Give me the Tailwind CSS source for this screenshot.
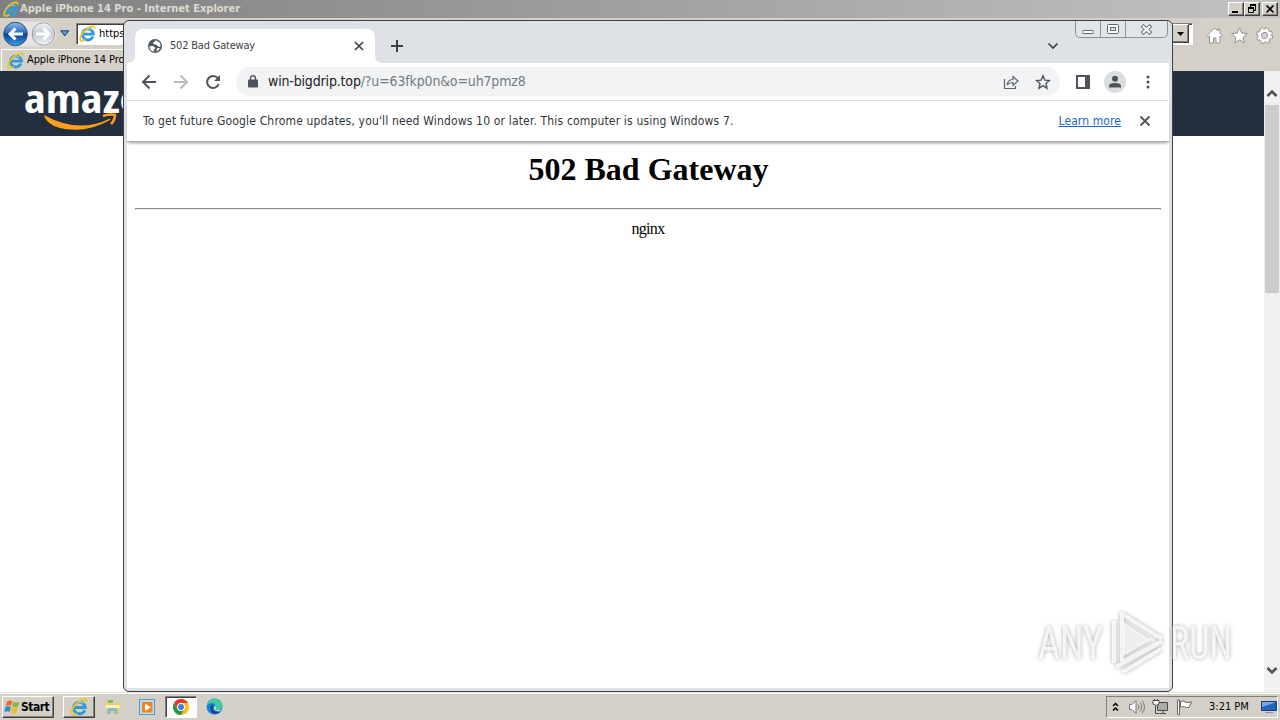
<!DOCTYPE html>
<html lang="en">
<head>
  <meta charset="UTF-8">
  <meta name="viewport" content="width=device-width, initial-scale=1.0">
  <title>502 Bad Gateway</title>
  <script src="https://cdn.jsdelivr.net/npm/@tailwindcss/browser@4"></script>
  <style>
    body {
      font-family: 'DejaVu Sans Condensed', 'DejaVu Sans', sans-serif;
      font-stretch: condensed;
    }
    .raised {
      border: 1px solid;
      border-color: #fff #404040 #404040 #fff;
      box-shadow: inset -1px -1px 0 #808080;
    }
    .sunken {
      border: 1px solid;
      border-color: #808080 #fff #fff #808080;
    }
  </style>
</head>
<body class="bg-white">
<!-- shared icons -->
<svg class="hidden">
  <symbol id="ie" viewBox="0 0 18 18">
    <path d="M14.800 12.200A5.800 5.800 0 1 1 15.200 9.600H5" fill="none" stroke="#2f9bdc" stroke-width="3"/>
    <path d="M5.500 6.500Q9 2.800 13.500 5.500" fill="none" stroke="#8fd4f5" stroke-width="1"/>
    <path d="M1.800 16.500C-.3 14 3.500 7.200 8.800 3.700 13 1 17.200.4 16.600 4.200M1.800 16.500c1.500 1 3.700 0 5.200-1" fill="none" stroke="#f0c41c" stroke-width="1.800"/>
  </symbol>
</svg>

<div class="relative flex flex-col w-[1280px] h-[720px] overflow-hidden text-[11px] text-black">

  <!-- Internet Explorer -->
  <header class="flex items-center h-[18px] pl-[3px] pr-0.5 bg-linear-to-r from-[#808080] to-[#c2c2c2]">
    <svg class="size-4"><use href="#ie"/></svg>
    <span class="flex-1 pl-px font-bold text-[#dedad2] leading-[18px] whitespace-nowrap">Apple iPhone 14 Pro - Internet Explorer</span>
    <div class="raised w-4 h-[14px] bg-[#d4d0c8]"><svg class="w-[14px] h-3"><path d="M3 9h6" stroke="#000" stroke-width="2"/></svg></div>
    <div class="raised w-4 h-[14px] bg-[#d4d0c8]"><svg class="w-[14px] h-3" fill="none" stroke="#000"><path d="M5 1.500h6M5.500 2v2M10.500 2v5.500H9M3 5h6M3.500 5v4.500h5V5" /><path d="M5 2h6M3 5h6" stroke-width="2"/></svg></div>
    <div class="raised w-4 h-[14px] ml-0.5 bg-[#d4d0c8]"><svg class="w-[14px] h-3"><path d="M3.500 2.500l7 7m0-7l-7 7" stroke="#000" stroke-width="1.700"/></svg></div>
  </header>

  <div class="flex items-center h-[31px] pl-[3px] pr-2 bg-[#d4d0c8]">
    <svg class="w-[54px] h-[28px]" viewBox="0 0 54 28">
      <defs>
        <linearGradient id="back" x2="0" y2="1"><stop stop-color="#8cb9e8"/><stop offset=".45" stop-color="#2c6cc0"/><stop offset=".5" stop-color="#0b3d94"/><stop offset="1" stop-color="#3aa0ee"/></linearGradient>
        <linearGradient id="fwd" x2="0" y2="1"><stop stop-color="#f2f4f6"/><stop offset=".5" stop-color="#c3cbd5"/><stop offset="1" stop-color="#edf2f7"/></linearGradient>
      </defs>
      <path d="M12 1.500h29a12 12 0 0 1 0 25H12z" fill="#e6e4e0"/>
      <circle cx="12.500" cy="14" r="11.800" fill="url(#back)" stroke="#31507e"/>
      <path d="M20 14H7m5.500-5.500L7 14l5.500 5.500" fill="none" stroke="#fff" stroke-width="3"/>
      <circle cx="40.500" cy="14" r="11.300" fill="url(#fwd)" stroke="#9a9fa8"/>
      <path d="M33 14h13m-5.500-5.500L46 14l-5.500 5.500" fill="none" stroke="#fff" stroke-width="3"/>
    </svg>
    <svg class="w-[10px] h-[7px] ml-[3px]"><path d="M.800.800h8L4.800 5.800z" fill="#4fa5e0" stroke="#173a66"/></svg>
    <div class="flex items-center h-[22px] flex-1 ml-1.5 border border-[#808080] border-r-white border-b-white bg-white shadow-[inset_1px_1px_0_#404040]">
      <svg class="size-[17px] ml-0.5 shrink-0"><use href="#ie"/></svg>
      <span class="pl-[3px] pt-px flex-1">https</span>
      <div class="raised flex items-center justify-center w-[18px] h-[19px] mr-[3px] bg-[#d4d0c8]"><svg class="w-[7px] h-1"><path d="M0 0h7L3.500 4z"/></svg></div>
    </div>
    <div class="flex gap-2 ml-[13px] mr-[-1px] pt-[3px]">
      <svg class="size-[17px]" viewBox="0 0 17 17" fill="#fff" stroke="#909090"><path d="M8.500 1L1 8.500l1.300 1.300L3.500 9v7h4v-5h2.500v5h4V9l1 .800 1.300-1.300-2.300-2.500V2h-2v2z"/></svg>
      <svg class="size-[17px]" viewBox="0 0 17 17" fill="#fff" stroke="#909090"><path d="M8.500.800l2.200 5.200 5.600.500-4.200 3.800 1.200 5.600-4.800-3-4.800 3 1.200-5.600L.700 6.500 6.300 6z"/></svg>
      <svg class="size-[17px]" viewBox="0 0 17 17" fill="none"><circle cx="8.500" cy="8.500" r="6.500" stroke="#909090" stroke-width="4" stroke-dasharray="3 2.105"/><circle cx="8.500" cy="8.500" r="4.800" stroke="#909090" stroke-width="4.500"/><circle cx="8.500" cy="8.500" r="6.300" stroke="#fff" stroke-width="2.600" stroke-dasharray="2.100 2.848" stroke-dashoffset="-.5"/><circle cx="8.500" cy="8.500" r="4.800" stroke="#fff" stroke-width="2.800"/></svg>
    </div>
  </div>

  <div class="flex h-[22px] bg-[#d4d0c8]">
    <div class="flex items-center w-[240px] ml-px border-t border-l border-white pl-[5px]">
      <svg class="size-[17px]"><use href="#ie"/></svg>
      <span class="pl-[3px] tracking-[-0.1px] whitespace-nowrap">Apple iPhone 14 Pro</span>
    </div>
  </div>

  <main class="flex flex-1 bg-white">
    <div class="flex-1">
      <div class="h-[65px] pl-6 bg-[#232f3e]">
        <svg class="w-[150px] h-[65px]">
          <text x="0" y="42" font-family="Open Sans, sans-serif" font-weight="700" font-size="40" fill="#fff" textLength="142" lengthAdjust="spacingAndGlyphs">amazon</text>
          <path d="M20 44q34 19 65 4q3-1 1 1q-28 16-56 6Q21 50 20 44z" fill="#ff9f1c"/>
          <path d="M79 45q7-2.500 12-1q0 5-4 9" fill="none" stroke="#ff9f1c" stroke-width="2.500"/>
        </svg>
      </div>
    </div>
    <div class="flex flex-col items-center justify-between w-4 bg-[#f0f0f0]">
      <div class="flex flex-col items-center w-full">
        <svg class="w-4 h-[34px]"><path d="M3.500 25L8 20.500l4.500 4.500" fill="none" stroke="#505050" stroke-width="2.500"/></svg>
        <div class="w-[14px] h-[188px] bg-[#cdcdcd]"></div>
      </div>
      <svg class="w-4 h-[32px]"><path d="M3.500 8L8 12.500 12.500 8" fill="none" stroke="#505050" stroke-width="2.500"/></svg>
    </div>
  </main>

  <!-- taskbar -->
  <footer class="flex items-center h-7 pl-0.5 pr-0.5 bg-[#d4d0c8] border-t border-[#e8e5df] shadow-[inset_0_1px_0_#fff]">
    <div class="raised flex items-center w-[52px] h-[22px] pl-px font-bold">
      <svg class="size-4" viewBox="0 0 16 16"><path d="M3 2.500q3-2 5.500-.3L7.200 7Q5 5.500 1.700 7.200z" fill="#ee6a24"/><path d="M9.500 2.800q3 1.600 5.800-.300L14 7.500q-3 1.700-5.700.1z" fill="#83ba3b"/><path d="M1.400 8.200q3-1.700 5.500-.2l-1.200 5Q3 11.500.2 13.200z" fill="#3687d2"/><path d="M7.900 8.600q3 1.500 5.800-.1l-1.200 4.800q-3 1.900-5.800.1z" fill="#f6bb22"/></svg>
      <span class="pl-px text-[12px] tracking-[-0.500px]">Start</span>
    </div>
    <div class="raised flex items-center justify-center w-8 h-[22px] ml-[9px]"><svg class="size-[18px]"><use href="#ie"/></svg></div>
    <svg class="w-[18px] h-[18px] ml-[9px]" viewBox="0 0 18 18"><path d="M2 3h6l1 2h7v11H2z" fill="#e9cf71"/><path d="M4 2h5v3H4z" fill="#80bc66"/><path d="M1.500 7h14v3h-14z" fill="#fbf0b2"/><path d="M3.500 16v-4q0-2 2-2h6q2 0 2 2v4h-3v-3h-4v3z" fill="#7bb9de"/></svg>
    <svg class="w-[18px] h-[18px] ml-4" viewBox="0 0 18 18"><rect x="1.500" y="1.500" width="15" height="15" fill="#bcdcf4" stroke="#5999ca"/><rect x="4" y="4" width="10.500" height="10.500" fill="#f08519"/><path d="M7 5.500v7.500l6-3.700z" fill="#fff"/></svg>
    <div class="sunken flex items-center justify-center w-8 h-[22px] ml-[9px] bg-white shadow-[inset_1px_1px_0_#404040]">
      <svg class="size-4" viewBox="0 0 16 16"><circle cx="8" cy="8" r="8" fill="#fbbd16"/><path d="M1.070 4A8 8 0 0 1 14.930 4H8a4 4 0 0 0-3.500 6z" fill="#e33b2e"/><path d="M1.070 4A8 8 0 0 0 8 16l3.500-6A4 4 0 0 1 4.500 10z" fill="#24994b"/><circle cx="8" cy="8" r="3.900" fill="#fff"/><circle cx="8" cy="8" r="3" fill="#3b7ded"/></svg>
    </div>
    <svg class="w-[17px] h-[17px] ml-[9px]" viewBox="0 0 17 17"><circle cx="8.500" cy="8.500" r="8" fill="#1684d8"/><path d="M.6 8Q2 .5 9 .5q7 .5 7.500 7 0 4-5 4-3 0-2-2 .5-4-3-4.500Q2.500 4.500.6 8z" fill="#43c8a7"/><path d="M6.500 6q-5 4 .5 9.500 5 2 8-2.500-7 2-8-2.500z" fill="#124b94"/><path d="M9 7.500q2 2 .5 3.500.5 1.200 4 .4L16 12l-3 1.500q-6-.5-5-4z" fill="#d4d0c8"/></svg>
    <div class="sunken flex items-center h-[22px] w-[172px] ml-auto pl-[5px]">
      <svg class="w-[7px] h-[10px]"><path d="M1 4l2.500-2.500L6 4M1 8.500L3.500 6 6 8.500" fill="none" stroke="#000" stroke-width="1.500"/></svg>
      <svg class="w-[18px] h-4 ml-[9px]" viewBox="0 0 18 16"><path d="M1.500 5.500h2.500l4-4v13l-4-4H1.500z" fill="#fff" stroke="#777"/><path d="M10 5.500q2 2.500 0 5M12 3.500q3.500 4.500 0 9M14 1.500q5 6.500 0 13" fill="none" stroke="#777"/></svg>
      <svg class="w-[18px] h-4 ml-1.5" viewBox="0 0 18 16" stroke="#4a4a4a"><path d="M5.500 3.500h10v8h-10z" fill="#aaa"/><path d="M8 14.500h6M3.500 7v7.500h4M11 12v2" fill="none"/><path d="M1 1.500h6V5Q4 8 1 5z" fill="#fff"/><path d="M2.500 0v2M5.500 0v2"/></svg>
      <svg class="w-[18px] h-4 ml-1.5" viewBox="0 0 18 16" fill="#fff" stroke="#666"><path d="M4.500 2.500q3-1.500 5.500 1l5.500-.500-2.500 5.500q-3 .500-4.500-1-2 .500-4 .500z"/><path d="M1.500 1h2v14.500h-2z"/></svg>
      <span class="ml-[15px] pt-px whitespace-nowrap">3:21 PM</span>
      <svg class="w-4 h-[14px] ml-auto" viewBox="0 0 16 14"><path d="M.5 1.500h15v9H.5z" fill="#2364bd" stroke="#153d78"/><path d="M1 2h14L1 7z" fill="#76a9df"/><path d="M4 12.500h8" stroke="#7890aa"/></svg>
    </div>
  </footer>

  <!-- Chrome window -->
  <section class="absolute left-[123px] top-5 flex flex-col w-[1050px] h-[672px] px-[3px] pb-[3px] border border-[#3d4145] rounded-[6px] bg-[#dee1e6] overflow-hidden">
    <div class="relative flex h-[42px] pt-2 pl-2 shrink-0">
      <div class="relative flex items-center w-[240px] h-[34px] pl-3 pr-[10px] bg-white rounded-t-lg text-[#3c4043]">
        <svg class="size-4" viewBox="0 0 16 16"><circle cx="8" cy="8" r="7" fill="#53585e"/><path d="M2.500 8.500q3-1 5 .500 1.500 1.500-.500 2.500l-.5 2.300Q2.500 12.500 2.500 8.500zM8.500 2.200q-.500 2-2.500 2.300 0 2 2 2 2-.500 2.500 1.500 1 1 3 .500.500-5-5-6.300zM10 10l3 0q-1 2.500-3.500 3.500z" fill="#fff"/></svg>
        <span class="flex-1 pl-[7px] pt-px tracking-[-0.2px] whitespace-nowrap">502 Bad Gateway</span>
        <svg class="size-3"><path d="M2 2l8 8m0-8l-8 8" stroke="#3c4043" stroke-width="1.700"/></svg>
        <svg class="absolute -left-2 bottom-0 size-2"><path d="M8 0v8H0q8 0 8-8z" fill="#fff"/></svg>
        <svg class="absolute -right-2 bottom-0 size-2"><path d="M0 0v8h8Q0 8 0 0z" fill="#fff"/></svg>
      </div>
      <svg class="size-[14px] ml-[15px] mt-[10px]"><path d="M7 1v12M1 7h12" stroke="#3c4043" stroke-width="2"/></svg>
      <svg class="absolute left-[920px] top-[21px] w-3 h-2"><path d="M1.500 1.500L6 6l4.500-4.500" fill="none" stroke="#3c4043" stroke-width="1.700"/></svg>
      <!-- window buttons -->
      <div class="absolute left-[948px] -top-px flex w-[93px] h-[18px] border border-[#8b9198] rounded-b-[5px] bg-[#e1e4e9]">
        <svg class="w-[25px] h-4 border-r border-[#8b9198]"><rect x="6.500" y="9.500" width="11" height="3" rx="1" fill="#fff" stroke="#5e646b"/></svg>
        <svg class="w-[25px] h-4 border-r border-[#8b9198]"><rect x="6.500" y="3.500" width="11" height="9" rx="1" fill="#fff" stroke="#5e646b"/><rect x="9.500" y="6.500" width="5" height="3" fill="#e1e4e9" stroke="#5e646b"/></svg>
        <svg class="w-[41px] h-4"><path d="M16 4.500l9 8m0-8l-9 8" stroke="#5e646b" stroke-width="4"/><path d="M16.700 5.100l7.600 6.800m0-6.800l-7.600 6.800" stroke="#fff" stroke-width="2.300"/></svg>
      </div>
    </div>

    <div class="flex items-center h-[37px] pl-3.5 pr-3.5 w-[1042px] bg-white text-[#4d5156] shrink-0">
      <svg class="size-4" fill="none" stroke="#50545a" stroke-width="2"><path d="M15 8H2m6.500-6.500L2 8l6.500 6.500"/></svg>
      <svg class="size-4 ml-4" fill="none" stroke="#b9bbbe" stroke-width="2"><path d="M1 8h13M7.500 1.500L14 8l-6.500 6.500"/></svg>
      <svg class="size-4 ml-4" fill="none" stroke="#50545a" stroke-width="2"><path d="M13.700 10.200A6 6 0 1 1 12.800 4.200"/><path d="M15 1v6H9z" fill="#50545a" stroke="none"/></svg>
      <div class="flex items-center w-[824px] h-[29px] ml-[15px] pl-3 pr-[9px] rounded-full bg-[#f1f3f4]">
        <svg class="w-[10px] h-[13px]"><rect y="4.500" width="10" height="8" rx="1" fill="#50545a"/><path d="M2.500 5V3.200a2.500 2.500 0 0 1 5 0V5" fill="none" stroke="#50545a" stroke-width="1.400"/></svg>
        <span class="flex-1 pl-[10px] text-[14px] tracking-[-0.16px] text-[#777b80] whitespace-nowrap"><span class="text-[#202124]">win-bigdrip.top</span>/?u=63fkp0n&amp;o=uh7pmz8</span>
        <svg class="size-4" fill="none" stroke="#5f6368" stroke-width="1.200"><path d="M1.500 5v9.500h11V12M4 11q1-5.500 6-5.500V2.500L15 7l-5 4.500V8.500Q6 8.500 4 11z"/></svg>
        <svg class="size-4 ml-4" viewBox="0 0 16 16" fill="none" stroke="#50545a" stroke-width="1.400"><path d="M8 1.800l1.800 4.300 4.700.400-3.500 3.100 1 4.600L8 11.700l-4 2.500 1-4.600L1.500 6.500l4.700-.400z"/></svg>
      </div>
      <svg class="w-[14px] h-[14px] ml-4"><path d="M1 1h12v12H1z" fill="none" stroke="#50545a" stroke-width="2"/><path d="M9 1h5v12H9z" fill="#50545a"/></svg>
      <svg class="size-[22px] ml-[14px]"><circle cx="11" cy="11" r="11" fill="#dadde2"/><circle cx="11" cy="7.800" r="3" fill="#50545a"/><path d="M5 16.500v-1.500q0-3 6-3t6 3v1.500z" fill="#50545a"/></svg>
      <svg class="w-1 h-[14px] ml-5" fill="#50545a"><circle cx="2" cy="2" r="1.500"/><circle cx="2" cy="7" r="1.500"/><circle cx="2" cy="12" r="1.500"/></svg>
    </div>

    <div class="relative flex items-center w-[1042px] h-[42px] pl-4 pr-[18px] border-t border-[#dadce0] border-b border-b-[#aaacae] bg-white text-[12px] text-[#333639] shadow-[0_2px_3px_-1px_#999] shrink-0">
      <span class="flex-1 tracking-[0.165px] whitespace-nowrap">To get future Google Chrome updates, you'll need Windows 10 or later. This computer is using Windows 7.</span>
      <a class="text-[#1a68c6] tracking-[0.1px] underline whitespace-nowrap">Learn more</a>
      <svg class="size-3 ml-[18px]"><path d="M1.500 1.500l9 9m0-9l-9 9" stroke="#50545a" stroke-width="1.800"/></svg>
    </div>

    <div class="flex-1 w-[1042px] px-2 pt-[9px] bg-white text-center font-['Liberation_Serif',serif]">
      <h1 class="pl-px text-[32px] leading-9 font-bold">502 Bad Gateway</h1>
      <hr class="mt-[21px] h-0.5 border border-[#8e8e8e] border-b-[#eee]">
      <p class="mt-[10px] text-[16px] leading-[18px] tracking-[-0.7px]">nginx</p>
    </div>
  </section>

  <!-- watermark -->
  <svg class="absolute left-[1030px] top-[602px] w-[220px] h-[78px] drop-shadow-[0_0_2px_#999]" viewBox="0 0 220 78">
    <g fill="#fff" fill-opacity=".8" font-family="Roboto, sans-serif" font-weight="400" font-size="47">
      <text x="8" y="57" textLength="65" lengthAdjust="spacingAndGlyphs">ANY</text>
      <text x="140" y="57" textLength="62" lengthAdjust="spacingAndGlyphs">RUN</text>
    </g>
    <path d="M92 60V12l40 25M84 19v42M92 60l40-21M86 65l42-23M93 70l38-23" fill="none" stroke="#fff" stroke-opacity=".8" stroke-width="4" stroke-linejoin="round"/>
    <path d="M93 20v34l28-16z" fill="#fff" fill-opacity=".8"/>
  </svg>
</div>
</body>
</html>
